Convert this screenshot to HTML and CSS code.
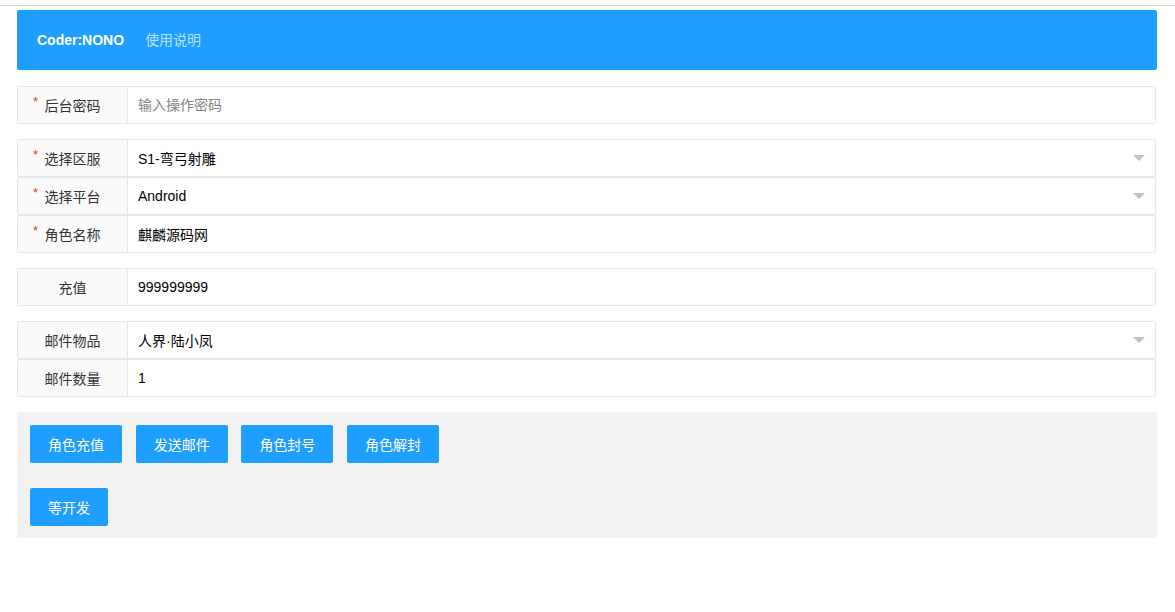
FILE: index.html
```html
<!DOCTYPE html>
<html lang="zh-CN">
<head>
    <meta charset="UTF-8">
    <meta name="viewport" content="width=device-width, initial-scale=1.0">
    <title>GM后台</title>
    <link rel="stylesheet" href="styles.css">
</head>
<body>

<div class="topline"></div>

<div class="page">
    <div class="header">
        <span class="logo">Coder:NONO</span>
        <a class="nav-link" href="#">使用说明</a>
    </div>

    <div class="group">
        <div class="field">
            <label class="field-label required">后台密码</label>
            <input class="field-input" type="password" placeholder="输入操作密码">
        </div>
    </div>

    <div class="group">
        <div class="field">
            <label class="field-label required">选择区服</label>
            <div class="field-input select">S1-弯弓射雕</div>
        </div>
        <div class="field">
            <label class="field-label required">选择平台</label>
            <div class="field-input select">Android</div>
        </div>
        <div class="field">
            <label class="field-label required">角色名称</label>
            <input class="field-input" type="text" value="麒麟源码网">
        </div>
    </div>

    <div class="group">
        <div class="field">
            <label class="field-label">充值</label>
            <input class="field-input" type="text" value="999999999">
        </div>
    </div>

    <div class="group">
        <div class="field">
            <label class="field-label">邮件物品</label>
            <div class="field-input select">人界·陆小凤</div>
        </div>
        <div class="field">
            <label class="field-label">邮件数量</label>
            <input class="field-input" type="text" value="1">
        </div>
    </div>

    <div class="actions">
        <div class="btn-row">
            <button class="btn">角色充值</button>
            <button class="btn">发送邮件</button>
            <button class="btn">角色封号</button>
            <button class="btn">角色解封</button>
        </div>
        <div class="btn-row">
            <button class="btn">等开发</button>
        </div>
    </div>
</div>

</body>
</html>
```

FILE: styles.css
```css
body {
    margin: 0;
    font-family: "Liberation Sans", "Noto Sans CJK SC", sans-serif;
    font-size: 14px;
    color: #333;
    background: #fff;
}

.topline {
    height: 5px;
    border-bottom: 1px solid #d6d6d6;
}

.page {
    padding: 4px 18px 0 17px;
}

.header {
    display: flex;
    align-items: center;
    height: 60px;
    box-sizing: border-box;
    padding: 0 20px 1px;
    background: #1E9FFF;
    border-radius: 2px;
    margin-bottom: 16px;
}

.logo {
    color: #fff;
    font-weight: bold;
    margin-right: 21px;
}

.nav-link {
    color: rgba(255, 255, 255, 0.7);
    text-decoration: none;
    padding-bottom: 1px;
}

.group {
    margin-bottom: 15px;
    margin-right: 1px;
}

.field {
    display: flex;
    height: 38px;
    box-sizing: border-box;
    border: 1px solid #e6e6e6;
    border-radius: 2px;
}

.field-label {
    position: relative;
    width: 109px;
    flex-shrink: 0;
    display: flex;
    align-items: center;
    justify-content: center;
    padding-bottom: 1px;
    background: #fafafa;
    border-right: 1px solid #e6e6e6;
}

.required::before {
    content: "*";
    position: absolute;
    left: 15px;
    top: 7px;
    color: #f0302a;
    font-size: 13px;
}

.field-input {
    flex: 1;
    position: relative;
    display: flex;
    align-items: center;
    padding: 0 10px 1px;
    border: none;
    outline: none;
    font: inherit;
    color: #000;
    background: #fff;
}

.field-input::placeholder {
    color: #858585;
}

.select::after {
    content: "";
    position: absolute;
    right: 10px;
    top: 15px;
    border-top: 6px solid #c2c2c2;
    border-left: 6px solid transparent;
    border-right: 6px solid transparent;
}

.actions {
    background: #f2f2f2;
    padding: 13px 13px 12px;
}

.btn-row {
    display: flex;
    gap: 13.7px;
}

.btn-row + .btn-row {
    margin-top: 25px;
}

.btn {
    height: 38px;
    padding: 0 18px 1px;
    border: none;
    border-radius: 2px;
    background: #1E9FFF;
    color: #fff;
    font: inherit;
    cursor: pointer;
}

.btn:hover {
    opacity: 0.8;
}
```
